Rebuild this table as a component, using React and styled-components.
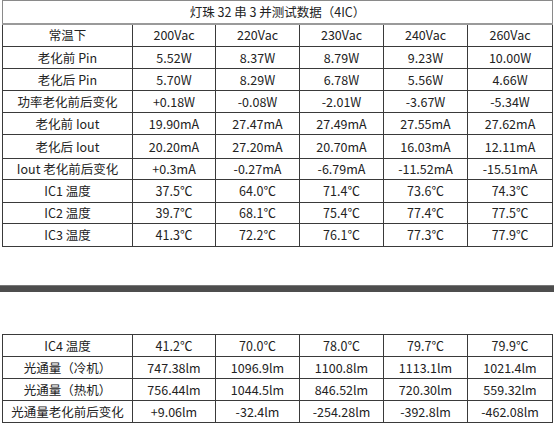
import React from "react";
import styled, { createGlobalStyle } from "styled-components";

const Global = createGlobalStyle`
  html, body { margin: 0; padding: 0; background: #fff; }
  body { font-family: "Noto Sans CJK SC", "Noto Sans", sans-serif; }
`;

const Page = styled.div`
  width: 554px;
  height: 423px;
  overflow: hidden;
  display: flex;
  flex-direction: column;
`;

const Table = styled.table`
  margin-left: 2px;
  width: 550px;
  border-collapse: collapse;
  table-layout: fixed;
  font-size: 12.5px;
  color: #222;
  margin-top: ${(p) => p.$top || 0}px;
`;

const Row = styled.tr`
  height: ${(p) => p.$h}px;
`;

const Cell = styled.td`
  border: 1px solid #3a3a3a;
  padding: 0;
  text-align: center;
  vertical-align: middle;
  line-height: 14px;
  white-space: nowrap;
`;

const TitleCell = styled.td`
  border: 1px solid #8a8a8a;
  border-bottom: 2px solid #9a9a9a;
  padding: 0;
  text-align: center;
  vertical-align: middle;
  line-height: 14px;
`;

const Band = styled.div`
  margin-top: 38px;
  height: 7px;
  background: #4d4d4d;
  border-top: 1px solid #777;
`;

const widths = [130, 83, 84, 84, 84, 85];

const Cols = () => (
  <colgroup>
    {widths.map((w, i) => (
      <col key={i} style={{ width: w }} />
    ))}
  </colgroup>
);

const top = [
  ["常温下", "200Vac", "220Vac", "230Vac", "240Vac", "260Vac"],
  ["老化前 Pin", "5.52W", "8.37W", "8.79W", "9.23W", "10.00W"],
  ["老化后 Pin", "5.70W", "8.29W", "6.78W", "5.56W", "4.66W"],
  ["功率老化前后变化", "+0.18W", "-0.08W", "-2.01W", "-3.67W", "-5.34W"],
  ["老化前 Iout", "19.90mA", "27.47mA", "27.49mA", "27.55mA", "27.62mA"],
  ["老化后 Iout", "20.20mA", "27.20mA", "20.70mA", "16.03mA", "12.11mA"],
  ["Iout 老化前后变化", "+0.3mA", "-0.27mA", "-6.79mA", "-11.52mA", "-15.51mA"],
  ["IC1 温度", "37.5℃", "64.0℃", "71.4℃", "73.6℃", "74.3℃"],
  ["IC2 温度", "39.7℃", "68.1℃", "75.4℃", "77.4℃", "77.5℃"],
  ["IC3 温度", "41.3℃", "72.2℃", "76.1℃", "77.3℃", "77.9℃"],
];
const topH = [23, 22, 22, 22, 22, 24, 21, 23, 21, 23];

const bottom = [
  ["IC4 温度", "41.2℃", "70.0℃", "78.0℃", "79.7℃", "79.9℃"],
  ["光通量（冷机）", "747.38lm", "1096.9lm", "1100.8lm", "1113.1lm", "1021.4lm"],
  ["光通量（热机）", "756.44lm", "1044.5lm", "846.52lm", "720.30lm", "559.32lm"],
  ["光通量老化前后变化", "+9.06lm", "-32.4lm", "-254.28lm", "-392.8lm", "-462.08lm"],
];

export default function App() {
  return (
    <Page>
      <Global />
      <Table>
        <Cols />
        <tbody>
          <Row $h={23}>
            <TitleCell colSpan={6}>灯珠 32 串 3 并测试数据（4IC）</TitleCell>
          </Row>
          {top.map((r, i) => (
            <Row key={i} $h={topH[i]}>
              {r.map((c, j) => (
                <Cell key={j}>{c}</Cell>
              ))}
            </Row>
          ))}
        </tbody>
      </Table>
      <Band />
      <Table $top={42}>
        <Cols />
        <tbody>
          {bottom.map((r, i) => (
            <Row key={i} $h={22}>
              {r.map((c, j) => (
                <Cell key={j}>{c}</Cell>
              ))}
            </Row>
          ))}
        </tbody>
      </Table>
    </Page>
  );
}
